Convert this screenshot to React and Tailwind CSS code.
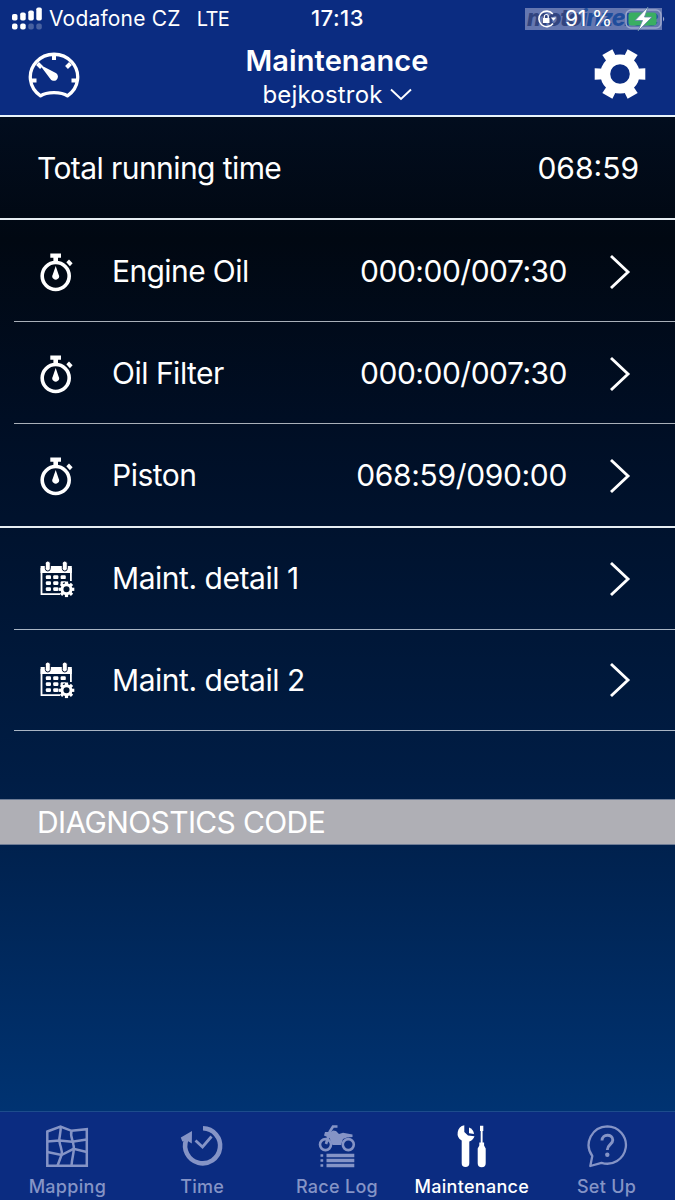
import React from "react";

const timers = [
  { id: "oil", label: "Engine Oil", value: "000:00/007:30", row: "h-[102px] pt-[2px] border-b", name: "tracking-[-0.6px]", time: "tracking-[-0.5px]" },
  { id: "filter", label: "Oil Filter", value: "000:00/007:30", row: "h-[102px] pt-[2px] border-b", name: "tracking-[-0.5px]", time: "tracking-[-0.5px]" },
  { id: "piston", label: "Piston", value: "068:59/090:00", row: "h-[102px] pt-px", name: "tracking-[-0.5px]", time: "tracking-[-0.35px]" },
];

const details = [
  { id: "d1", label: "Maint. detail 1", row: "h-[102px]" },
  { id: "d2", label: "Maint. detail 2", row: "h-[101px]" },
];

const teeth = [0, 60, 120, 180, 240, 300];
const smallTeeth = [0, 45, 90, 135, 180, 225, 270, 315];

const GaugeIcon = () => (
  <svg width="52" height="50" viewBox="0 0 52 50" fill="none" stroke="#fff">
    <path d="M12.500 44.800A23.700 22.800 0 1 1 39.500 44.800C33.500 40.500 18.500 40.500 12.500 44.800Z" strokeWidth="3.300" strokeLinejoin="round" />
    <path d="M26 3v6M9.500 12.500l4 4M42.500 12.500l-4 4M3 29.500h5.500M49 29.500h-5.500" strokeWidth="4" />
    <path d="M11.500 13.500L28.300 22.300A4.200 4.200 0 1 1 22 27.500Z" fill="#fff" stroke="none" />
  </svg>
);

const GearIcon = () => (
  <svg width="52" height="52" viewBox="-26 -26 52 52" fill="#fff">
    <circle r="14.700" fill="none" stroke="#fff" strokeWidth="9.800" />
    {teeth.map((a) => (
      <path key={a} d="M16 -5.200L25.300 -5.800V5.800L16 5.200Z" transform={`rotate(${a})`} />
    ))}
  </svg>
);

const StopwatchIcon = () => (
  <svg width="34" height="40" viewBox="0 0 34 40" fill="#fff">
    <circle cx="15.700" cy="24" r="13.500" fill="none" stroke="#fff" strokeWidth="3.600" />
    <path d="M10.300 1.500h10.700v4.300h-3v4h-4.600v-4h-3.100z" />
    <path d="M26.300 10.300l2.700-2.800 3.600 3.700-2.700 3z" />
    <path d="M15.700 14l2.900 8.500a3.400 3.400 0 1 1-5.800 0z" />
  </svg>
);

const CalendarIcon = () => (
  <svg width="36" height="38" viewBox="0 0 36 38" fill="#fff">
    <path d="M1.500 8v26.200h18.500M30.900 8v13" fill="none" stroke="#fff" strokeWidth="1.800" />
    <path d="M.6 6h31.200v7H.6z" />
    {[5.300, 22.300].map((x) => (
      <rect key={x} x={x} y="1" width="5" height="10" rx="2.500" stroke="#04122e" strokeWidth="1" />
    ))}
    {[15.300, 21.200, 27.200].map((y) => (
      <g key={y}>
        <rect x="5.800" y={y} width="5.200" height="3.800" rx="1.200" />
        <rect x="13.200" y={y} width="5.200" height="3.800" rx="1.200" />
        <rect x="20.600" y={y} width="5.200" height="3.800" rx="1.200" />
      </g>
    ))}
    <g transform="translate(26.500 29.300)">
      <circle r="7.200" fill="#001530" />
      <circle r="4.500" fill="none" stroke="#fff" strokeWidth="2.900" />
      {smallTeeth.map((a) => (
        <path key={a} d="M4.500 -1.600h3.300v3.200h-3.300z" transform={`rotate(${a})`} />
      ))}
    </g>
  </svg>
);

const ChevronRight = () => (
  <svg width="22" height="36" viewBox="0 0 22 36" fill="none" stroke="#fff" strokeWidth="2.900">
    <path d="M2 2L19 18L2 34" />
  </svg>
);

const MapIcon = () => (
  <svg width="44" height="44" viewBox="0 0 44 44" fill="none" stroke="currentColor" strokeWidth="2.500">
    <path d="M2.300 7.500L15.500 2.500 26.500 6.800 41.800 5.200V41.700H2.300Z" />
    <path d="M15.500 2.500C16.500 9 13.500 13 14.500 17.500 15 23 18 26 16.500 31L12.500 41.700M26.500 6.800C25 12 27.500 15 28.500 21 30 27 27 32 26.500 41.700" />
    <path d="M2.300 17.500L14.500 16.500 27 17.800 41.800 15.500M2.300 28L16.500 31 28.500 24.800 41.800 28" />
  </svg>
);

const TimeIcon = () => (
  <svg width="44" height="44" viewBox="0 0 44 44" fill="none" stroke="currentColor">
    <path d="M23 4.300A17.500 17.500 0 1 1 6.300 15.500" strokeWidth="4.600" />
    <path d="M.8 13.500L12 7 11.800 19.500 7 16.500 2.300 17.500Z" fill="currentColor" stroke="none" />
    <path d="M15.500 16.500L22.500 23 31.500 12.500" strokeWidth="2.800" />
  </svg>
);

const RaceIcon = () => (
  <svg width="40" height="44" viewBox="0 0 40 44" fill="none" stroke="currentColor">
    <circle cx="8.500" cy="20.600" r="5.500" strokeWidth="2.600" />
    <circle cx="31.300" cy="20.600" r="5.500" strokeWidth="2.600" />
    <path d="M20.500 2.500h-4.500l-3.200 5L9 20" strokeWidth="2.700" />
    <path d="M8 8h5.500l2.500-1.500 3 .5 3 3 4-1.300 9.500 1.800v2.500l-5.500.6-4 1.400-2 6h-8.500l-3-7-5.500-2.500z" fill="currentColor" stroke="none" />
    <path d="M9.500 31.500h27.800M9.500 36.500h27.800M9.500 41.500h27.800" strokeWidth="3.400" />
    <path d="M3.500 31.500h2.700M3.500 36.500h2.700M3.500 41.500h2.700" strokeWidth="2.700" />
  </svg>
);

const ToolsIcon = () => (
  <svg width="32" height="44" viewBox="0 0 32 44" fill="currentColor">
    <path d="M8.300 1.200A8.300 8.300 0 0 0 5.700 16.500V39.300a3.700 3.700 0 0 0 7.600 0V17.500A8.300 8.300 0 0 0 18.500 12.300L12 11.500 8.300 8Z" />
    <path d="M13 3.500A8 8 0 0 1 18 10L13 9.300Z" />
    <path d="M24 1.800h3.300v5.200H24zM24.700 7h1.900v12h-1.900zM23.300 18.500h4.800v3.500h-4.800z" />
    <path d="M21.700 24.500l1.500-2.700h5l1.500 2.700V39.300a3.900 3.900 0 0 1-8 0z" />
  </svg>
);

const HelpIcon = () => (
  <svg width="42" height="44" viewBox="0 0 42 44" fill="none" stroke="currentColor" strokeWidth="2.300">
    <path d="M21.300 2.300A18.700 18.700 0 1 1 15.500 38.800L4.300 42 6.300 32A18.700 18.700 0 0 1 21.300 2.300Z" strokeLinejoin="round" />
    <path d="M16 16.500C16 9.500 26.800 9.500 26.800 16 26.800 20.500 21.300 20.500 21.300 26" strokeWidth="2.900" />
    <circle cx="21.300" cy="30.700" r="2.200" fill="currentColor" stroke="none" />
  </svg>
);

const tabs = [
  { id: "mapping", label: "Mapping", Icon: MapIcon },
  { id: "time", label: "Time", Icon: TimeIcon },
  { id: "race", label: "Race Log", Icon: RaceIcon },
  { id: "maintenance", label: "Maintenance", Icon: ToolsIcon },
  { id: "setup", label: "Set Up", Icon: HelpIcon },
];

const SignalIcon = () => (
  <svg width="32" height="24" viewBox="0 0 32 24" fill="#fff">
    <rect x="1" y="7" width="5.500" height="6.500" rx="1.800" />
    <rect x="9.200" y="5.500" width="5.500" height="8" rx="1.800" />
    <rect x="17.300" y="3.500" width="5.500" height="10" rx="1.800" />
    <rect x="25.300" y=".5" width="5.500" height="13" rx="1.800" />
    <rect x="1" y="16.500" width="5.500" height="6" rx="2" />
    <rect x="9.200" y="16.500" width="5.500" height="6" rx="2" />
    <rect x="17.300" y="16.500" width="5.500" height="6" rx="2" opacity=".25" />
    <rect x="25.300" y="16.500" width="5.500" height="6" rx="2" opacity=".25" />
  </svg>
);

const LockIcon = () => (
  <svg width="20" height="20" viewBox="0 0 20 20" fill="none" stroke="#fff" strokeWidth="1.600">
    <path d="M15.800 5A7.800 7.800 0 1 0 16 14.500" />
    <path d="M13.800 8.500h5.400l-2.700 3.300z" fill="#fff" stroke="none" />
    <path d="M6 9h6.500v5H6z" fill="#fff" stroke="none" />
    <path d="M7.300 9V7.500a2 2 0 0 1 4 0V9" strokeWidth="1.200" />
  </svg>
);

const BatteryIcon = () => (
  <svg width="42" height="26" viewBox="0 0 42 26">
    <rect x="1" y="4" width="35" height="18" rx="5" fill="none" stroke="#9aa7cc" strokeWidth="1.500" />
    <rect x="3.500" y="6.500" width="28" height="13" rx="3" fill="#3aae62" />
    <path d="M38 10.500q2.500 2.500 0 5z" fill="#9aa7cc" />
    <path d="M23 1L10 14.500h7.500L13 25 27 11H19.500z" fill="#fff" stroke="#5f83a8" strokeWidth=".8" />
  </svg>
);

const StatusBar = () => (
  <div className="relative h-[37px] flex items-center text-[21px] pl-[11px]">
    <SignalIcon />
    <span className="ml-[6px] tracking-[0.2px]">Vodafone CZ</span>
    <span className="ml-[16px] text-[20px] tracking-[-0.6px]">LTE</span>
    <span className="absolute left-0 w-full text-center text-[22px] font-medium tracking-[0.5px]">17:13</span>
    {/* watermark strip sits under the battery block */}
    <div className="absolute left-[525px] top-[8px] w-[137px] h-[22px] bg-[#6577b0]">
      <span className="block pl-[2px] text-[23px] leading-[21px] font-extrabold italic tracking-[-1.1px] text-[#31447f]">
        moto<span className="text-[#1f4d9c]">inzerce</span>
      </span>
    </div>
    <div className="absolute left-[537px] top-[6px] h-[26px] flex items-center">
      <LockIcon />
      <span className="ml-[8px] w-[51px] whitespace-nowrap text-[21px] tracking-[-0.2px]">91 %</span>
      <span className="ml-[9px]"><BatteryIcon /></span>
    </div>
  </div>
);

const App = () => {
  return (
    <div
      className="w-[675px] h-[1200px] flex flex-col overflow-hidden text-white bg-[linear-gradient(180deg,#020d1e_117px,#010812_240px,#000e24_420px,#001d45_780px,#003372_1111px)]"
      style={{ fontFamily: "Inter, sans-serif" }}
    >
      <header className="h-[117px] shrink-0 bg-[#0b2c81] border-b-2 border-[#e8f4fb]">
        <StatusBar />
        <div className="flex justify-between pl-[28px] pr-[29px]">
          <div className="w-[52px] pt-[14px]"><GaugeIcon /></div>
          <div className="flex flex-col items-center pt-[5px]">
            <h1 className="text-[29px] leading-[38px] font-semibold tracking-[0.1px]">Maintenance</h1>
            <div className="flex items-center leading-[30px] text-[24px]">
              <span className="tracking-[0.2px]">bejkostrok</span>
              <svg className="ml-[7px]" width="22" height="14" viewBox="0 0 22 14" fill="none" stroke="#fff" strokeWidth="1.900">
                <path d="M1 1.500l10 9.500L21 1.500" />
              </svg>
            </div>
          </div>
          <div className="w-[52px] pt-[11px]"><GearIcon /></div>
        </div>
      </header>

      <div className="h-[103px] shrink-0 flex items-center justify-between pt-[2px] pl-[37px] pr-[36px] text-[30px] border-b-2 border-[#e6edf2]">
        <span className="tracking-[-0.58px]">Total running time</span>
        <span>068:59</span>
      </div>

      <div className="shrink-0 border-b-2 border-[#e6edf2] text-[30px]">
        {timers.map((t) => (
          <div key={t.id} className="pl-[14px]">
            <div className={`${t.row} flex items-center pl-[26px] pr-[44px] border-[#a9b0b9]`}>
              <StopwatchIcon />
              <span className={`ml-[38px] flex-1 ${t.name}`}>{t.label}</span>
              <span className={`mr-[42px] ${t.time}`}>{t.value}</span>
              <ChevronRight />
            </div>
          </div>
        ))}
      </div>

      <div className="shrink-0 text-[30px]">
        {details.map((d) => (
          <div key={d.id} className="pl-[14px]">
            <div className={`${d.row} flex items-center pl-[26px] pr-[44px] border-b border-[#a9b5c4]`}>
              <CalendarIcon />
              <span className="ml-[36px] flex-1 tracking-[-0.46px]">{d.label}</span>
              <ChevronRight />
            </div>
          </div>
        ))}
      </div>

      <div className="mt-[68px] h-[46px] shrink-0 flex items-center pl-[37px] text-[30px] bg-[#afafb5] border-y border-[#6d7b95]">
        <span className="tracking-[-0.63px]">DIAGNOSTICS CODE</span>
      </div>

      <nav className="mt-auto h-[89px] shrink-0 grid grid-cols-5 pr-px bg-[#0b2c81] border-t border-[#1d4c8c]">
        {tabs.map(({ id, label, Icon }) => (
          <div
            key={id}
            className={`flex flex-col items-center pt-[12px] ${id === "maintenance" ? "text-white" : "text-[#8594c6]"}`}
          >
            <Icon />
            <span className="mt-[6px] text-[18px] leading-[26px] font-medium tracking-[0.3px]">{label}</span>
          </div>
        ))}
      </nav>
    </div>
  );
};

export default App;
